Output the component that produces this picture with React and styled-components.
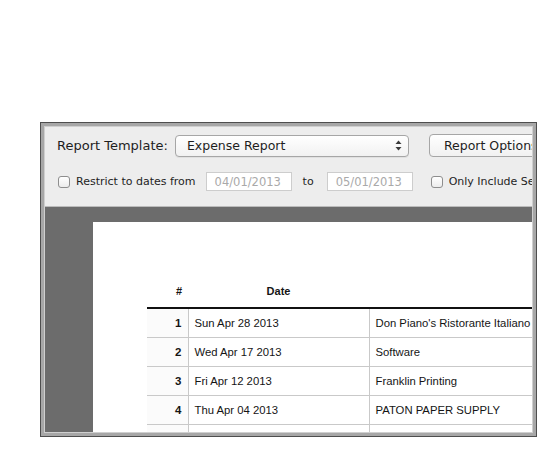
import React from "react";
import styled, { createGlobalStyle } from "styled-components";

const Global = createGlobalStyle`
  html, body { margin: 0; padding: 0; background: #ffffff; }
  body { width: 538px; height: 458px; overflow: hidden; }
`;

const Page = styled.div`
  padding: 122px 0 0 40px;
`;

const Window = styled.div`
  box-sizing: border-box;
  width: 497px;
  height: 315px;
  border: 1px solid #4e4e4e;
  background: #a7a7a7;
  padding: 3px;
  display: flex;
`;

const Inner = styled.div`
  flex: 1;
  border: 1px solid #cfcfcf;
  display: flex;
  flex-direction: column;
  overflow: hidden;
  min-width: 0;
`;

const Toolbar = styled.div`
  height: 80px;
  flex: none;
  background: #ededed;
  border-bottom: 1px solid #bcbcbc;
  box-sizing: border-box;
  padding: 7px 0 0 12px;
  display: flex;
  flex-direction: column;
  gap: 15px;
  font-family: "DejaVu Sans", sans-serif;
  color: #1e1e1e;
  white-space: nowrap;
  overflow: hidden;
`;

const Row = styled.div`
  display: flex;
  align-items: center;
  height: ${(p) => p.$h}px;
`;

const Label = styled.span`
  flex: none;
  font-size: ${(p) => p.$size}px;
  margin-right: ${(p) => p.$mr || 0}px;
  margin-left: ${(p) => p.$ml || 0}px;
`;

const Select = styled.div`
  box-sizing: border-box;
  flex: none;
  width: 234px;
  height: 22px;
  margin-left: 7px;
  border: 1px solid #a6a6a6;
  border-radius: 4px;
  background: linear-gradient(#ffffff, #f1f1f1);
  display: flex;
  align-items: center;
  justify-content: space-between;
  padding: 0 6px 0 11px;
  font-size: 12.5px;
  box-shadow: 0 1px 0 rgba(0, 0, 0, 0.05);
`;

const Button = styled.div`
  box-sizing: border-box;
  height: 23px;
  margin-left: 20px;
  border: 1px solid #a6a6a6;
  border-radius: 4px;
  background: linear-gradient(#ffffff, #f1f1f1);
  display: flex;
  align-items: center;
  padding: 0 14px;
  font-size: 12.5px;
  flex: none;
`;

const Check = styled.span`
  box-sizing: border-box;
  width: 12px;
  height: 12px;
  border: 1px solid #8e8e8e;
  border-radius: 3px;
  background: linear-gradient(#ffffff, #ececec);
  flex: none;
  margin-left: ${(p) => p.$ml || 1}px;
  margin-right: 6px;
`;

const DateInput = styled.span`
  box-sizing: border-box;
  width: 86px;
  height: 19px;
  border: 1px solid #cdcdcd;
  background: #ffffff;
  color: #a9a9a9;
  font-size: 11.5px;
  display: flex;
  align-items: center;
  padding-left: 8px;
  flex: none;
`;

const Content = styled.div`
  flex: 1;
  background: #6c6c6c;
  padding: 15px 0 0 48px;
  display: flex;
  min-height: 0;
`;

const Sheet = styled.div`
  flex: 1;
  background: #ffffff;
  padding: 61px 0 0 54px;
  overflow: hidden;
`;

const Table = styled.table`
  border-collapse: collapse;
  font-family: "Liberation Sans", Arial, sans-serif;
  color: #151515;
  table-layout: fixed;
  width: 600px;
`;

const Th = styled.th`
  font-size: 11px;
  font-weight: bold;
  height: 24px;
  padding: 0 ${(p) => (p.$align === "right" ? "6px" : "0")} 8px 0;
  line-height: 16px;
  vertical-align: bottom;
  text-align: ${(p) => p.$align || "center"};
  border-bottom: 2px solid #111111;
  box-sizing: border-box;
`;

const Td = styled.td`
  font-size: ${(p) => (p.$num ? "11.5px" : "11.3px")};
  height: 28px;
  padding: 0 ${(p) => (p.$num ? "6px" : "0")} 0 ${(p) => (p.$num ? "0" : "6px")};
  font-weight: ${(p) => (p.$num ? "bold" : "normal")};
  text-align: ${(p) => (p.$num ? "right" : "left")};
  border-bottom: 1px solid #c9c9c9;
  border-left: ${(p) => (p.$first ? "none" : "1px solid #c9c9c9")};
  background: ${(p) => (p.$num ? "#fbfbfb" : "#ffffff")};
  white-space: nowrap;
  overflow: hidden;
`;

const Arrows = () => (
  <svg width="7" height="11" viewBox="0 0 7 11">
    <path d="M3.5 0.5 L6.5 4 L0.5 4 Z" fill="#3a3a3a" />
    <path d="M3.5 10.5 L6.5 7 L0.5 7 Z" fill="#3a3a3a" />
  </svg>
);

const rows = [
  ["1", "Sun Apr 28 2013", "Don Piano's Ristorante Italiano"],
  ["2", "Wed Apr 17 2013", "Software"],
  ["3", "Fri Apr 12 2013", "Franklin Printing"],
  ["4", "Thu Apr 04 2013", "PATON PAPER SUPPLY"],
  ["", "", ""],
];

export default function App() {
  return (
    <>
      <Global />
      <Page>
        <Window>
          <Inner>
            <Toolbar>
              <Row $h={23}>
                <Label $size={13}>Report Template:</Label>
                <Select>
                  <span>Expense Report</span>
                  <Arrows />
                </Select>
                <Button>Report Options…</Button>
              </Row>
              <Row $h={19}>
                <Check />
                <Label $size={11} $mr={10}>Restrict to dates from</Label>
                <DateInput>04/01/2013</DateInput>
                <Label $size={11} $ml={11} $mr={13}>to</Label>
                <DateInput>05/01/2013</DateInput>
                <Check $ml={18} />
                <Label $size={11}>Only Include Selected</Label>
              </Row>
            </Toolbar>
            <Content>
              <Sheet>
                <Table>
                  <colgroup>
                    <col style={{ width: 41 }} />
                    <col style={{ width: 181 }} />
                    <col style={{ width: 378 }} />
                  </colgroup>
                  <thead>
                    <tr>
                      <Th $align="right">#</Th>
                      <Th>Date</Th>
                      <Th />
                    </tr>
                  </thead>
                  <tbody>
                    {rows.map((r, i) => (
                      <tr key={i}>
                        <Td $num $first>{r[0]}</Td>
                        <Td>{r[1]}</Td>
                        <Td>{r[2]}</Td>
                      </tr>
                    ))}
                  </tbody>
                </Table>
              </Sheet>
            </Content>
          </Inner>
        </Window>
      </Page>
    </>
  );
}
